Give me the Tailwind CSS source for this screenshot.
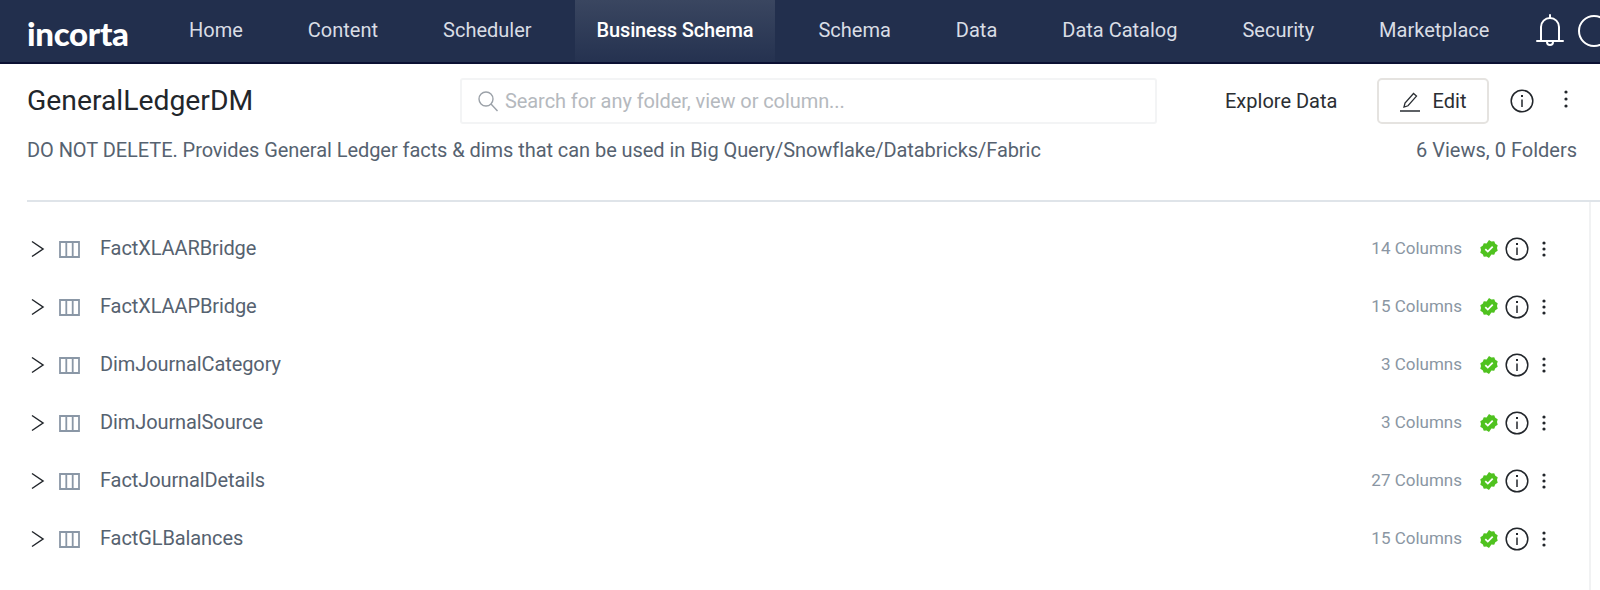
<!DOCTYPE html>
<html lang="en">
<head>
    <meta charset="UTF-8">
    <meta name="viewport" content="width=device-width, initial-scale=1.0">
    <title>GeneralLedgerDM</title>
    <script src="https://cdn.jsdelivr.net/npm/@tailwindcss/browser@4"></script>
</head>
<body class="w-[1600px] h-[590px] overflow-hidden bg-white font-['Roboto',sans-serif]">
    <!-- top nav -->
    <nav class="flex items-stretch h-[64px] bg-[#222f4d] border-b-2 border-[#0b1033] text-[20px] text-[#d9dde5] overflow-hidden">
        <div class="w-[167px] shrink-0 pl-[27px] pt-[9px] font-['Lato',sans-serif] font-black text-[33px] tracking-[-0.3px] text-white">incorta</div>
        <div class="flex items-stretch gap-[21px] shrink-0">
            <a class="flex items-center px-[22px] pb-[2px]">Home</a>
            <a class="flex items-center px-[22px] pb-[2px]">Content</a>
            <a class="flex items-center px-[22px] pb-[2px]">Scheduler</a>
            <a class="flex items-center px-[22px] pb-[2px] font-medium tracking-[-0.15px] text-white bg-gradient-to-b from-[#3a4660] to-[#253250]">Business Schema</a>
            <a class="flex items-center px-[22px] pb-[2px]">Schema</a>
            <a class="flex items-center px-[22px] pb-[2px]">Data</a>
            <a class="flex items-center px-[22px] pb-[2px]">Data Catalog</a>
            <a class="flex items-center px-[22px] pb-[2px]">Security</a>
            <a class="flex items-center px-[22px] pb-[2px]">Marketplace</a>
        </div>
        <div class="flex items-center gap-[13px] ml-[25px] shrink-0 text-white">
            <svg width="28" height="34" viewBox="0 0 28 34" fill="none" stroke="currentColor" stroke-width="2"><path d="M14 1v3M5 26V13a9 9 0 0 1 18 0v13M1 27h26" stroke-linecap="round"/><path d="M11 28a3 3 0 0 0 6 0"/></svg>
            <svg class="shrink-0" width="34" height="34" viewBox="0 0 34 34" fill="none" stroke="currentColor" stroke-width="2"><circle cx="17" cy="17" r="15"/></svg>
        </div>
    </nav>

    <!-- header -->
    <header class="ml-[27px] h-[138px] border-b-2 border-[#dfe4e9]">
        <div class="flex items-center pt-[14px]">
            <h1 class="w-[433px] text-[28.3px] leading-[46px] text-[#22262b]">GeneralLedgerDM</h1>
            <div class="flex items-center w-[697px] h-[46px] pl-[15px] gap-[6px] border-2 border-[#f3f4f5] rounded-[3px] text-[20px] tracking-[-0.08px] text-[#b5b9be]">
                <svg width="22" height="22" viewBox="0 0 22 22" fill="none" stroke="#9ba1a8" stroke-width="1.4"><circle cx="9" cy="9" r="7"/><path d="M14 14l6.5 7"/></svg>
                <span>Search for any folder, view or column...</span>
            </div>
            <span class="ml-[68px] w-[152px] text-[20px] text-[#2a2e33]">Explore Data</span>
            <button class="flex items-center justify-center gap-[12px] w-[112px] h-[46px] border-2 border-[#e5e3e0] rounded-[5px] text-[20px] text-[#2a2e33]">
                <svg width="21" height="21" viewBox="0 0 21 21" fill="none" stroke="#2a2e33" stroke-width="1.3"><path d="M0 20h20M4 16l1-4 8.5-9.5 3 2.6L8 14.8z"/></svg>
                Edit
            </button>
            <svg class="ml-[21px]" width="24" height="24" viewBox="0 0 24 24" fill="none" stroke="#22262b" stroke-width="1.5"><circle cx="12" cy="12" r="10.8"/><path d="M12 10.5v7.5"/><path d="M12 6v2" stroke-width="2"/></svg>
            <svg class="ml-[29px] -mt-[4px]" width="6" height="20" viewBox="0 0 6 20" fill="#22262b"><circle cx="3" cy="3" r="1.6"/><circle cx="3" cy="10" r="1.6"/><circle cx="3" cy="17" r="1.6"/></svg>
        </div>
        <div class="flex justify-between w-[1550px] mt-[13px] text-[20px] leading-[26px] text-[#566270]">
            <p class="tracking-[-0.06px]">DO NOT DELETE. Provides General Ledger facts &amp; dims that can be used in Big Query/Snowflake/Databricks/Fabric</p>
            <p>6 Views, 0 Folders</p>
        </div>
    </header>

    <!-- views list -->
    <main class="flex">
        <div id="viewList" class="w-[1591px] pt-[18px] pl-[30px] border-r-2 border-[#f1f2f3] h-[400px]"></div>
    </main>

    <script>
        const views = [
            { name: 'FactXLAARBridge', columns: 14 },
            { name: 'FactXLAAPBridge', columns: 15 },
            { name: 'DimJournalCategory', columns: 3 },
            { name: 'DimJournalSource', columns: 3 },
            { name: 'FactJournalDetails', columns: 27 },
            { name: 'FactGLBalances', columns: 15 },
        ];
        document.getElementById('viewList').innerHTML = views.map(view => `
            <div class="flex items-center h-[58px]">
                <svg width="15" height="18" viewBox="0 0 15 18" fill="none" stroke="#22262b" stroke-width="1.5"><path d="M2 1.5l11 7.5-11 7.5"/></svg>
                <svg class="ml-[14px]" width="21" height="17" viewBox="0 0 21 17" fill="none" stroke="#8a97a6" stroke-width="1.8"><path d="M1 1h19v15H1zM7.3 1v15M13.7 1v15"/></svg>
                <span class="ml-[20px] pb-[2px] text-[20px] tracking-[-0.1px] text-[#566270]">${view.name}</span>
                <span class="ml-auto text-[17px] text-[#8a96a3]">${view.columns} Columns</span>
                <svg class="ml-[18px]" width="18" height="18" viewBox="0 0 18 18"><path fill="#4fc21f" d="M9 0l2.4 1.5 2.8-.3 1.1 2.6 2.4 1.5-.7 2.7.7 2.7-2.4 1.5-1.1 2.6-2.8-.3L9 18l-2.4-1.5-2.8.3-1.1-2.6L.3 12.7 1 10 .3 7.3l2.4-1.5 1.1-2.6 2.8.3z"/><path d="M5.3 9.2l2.5 2.4 4.9-4.9" fill="none" stroke="#fff" stroke-width="1.8"/></svg>
                <svg class="ml-[7px]" width="24" height="24" viewBox="0 0 24 24" fill="none" stroke="#22262b" stroke-width="1.5"><circle cx="12" cy="12" r="10.8"/><path d="M12 10.5v7.5"/><path d="M12 6v2" stroke-width="2"/></svg>
                <svg class="ml-[12px] mr-[42px]" width="6" height="18" viewBox="0 0 6 18" fill="#22262b"><circle cx="3" cy="3" r="1.6"/><circle cx="3" cy="9" r="1.6"/><circle cx="3" cy="15" r="1.6"/></svg>
            </div>
        `).join('');
    </script>
</body>
</html>
